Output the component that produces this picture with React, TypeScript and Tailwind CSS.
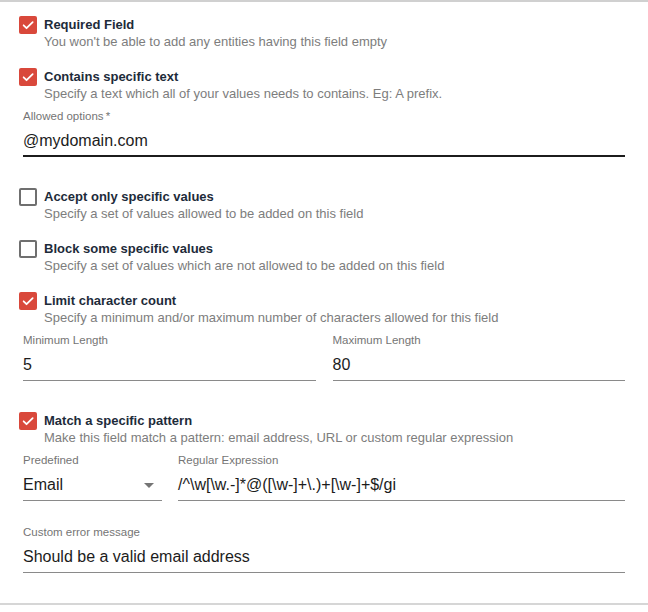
import React from "react";

type CheckProps = {
  checked: boolean;
  title: string;
  description: string;
};

function Check({ checked, title, description }: CheckProps) {
  return (
    <div className="flex items-start">
      {checked ? (
        <div className="mt-[6px] flex h-[18px] w-[18px] shrink-0 items-center justify-center rounded-[2px] bg-[#d9483b]">
          <svg width="14" height="14" viewBox="0 0 24 24" fill="none">
            <path
              d="M4.5 12.5l5 5L20 7"
              stroke="white"
              strokeWidth="3"
              strokeLinecap="round"
              strokeLinejoin="round"
            />
          </svg>
        </div>
      ) : (
        <div className="mt-[6px] h-[18px] w-[18px] shrink-0 rounded-[2px] border-2 border-[#6f6f6f]" />
      )}
      <div className="ml-[7px]">
        <div className="mt-[6px] text-[13px] leading-[18px] font-bold text-[#1d2b3a]">
          {title}
        </div>
        <div className="text-[13px] leading-[15px] text-[#7d7d7d]">
          {description}
        </div>
      </div>
    </div>
  );
}

type FieldProps = {
  label: string;
  value: string;
  focused?: boolean;
  select?: boolean;
  className?: string;
};

function Field({ label, value, focused, select, className }: FieldProps) {
  return (
    <div className={className}>
      <div className="text-[11.5px] leading-[14px] text-[#757575]">{label}</div>
      <div
        className={
          focused
            ? "mt-[8px] flex items-center border-b-2 border-[#1c1c1c] pb-[4px]"
            : "mt-[8px] flex items-center border-b border-[#8a8a8a] pb-[5px]"
        }
      >
        <span className="flex-1 text-[16px] leading-[20px] text-[#1c1c1c]">
          {value}
        </span>
        {select && (
          <svg width="10" height="5" viewBox="0 0 10 5" className="mr-[8px]">
            <path d="M0 0h10L5 5z" fill="#757575" />
          </svg>
        )}
      </div>
    </div>
  );
}

export default function App() {
  return (
    <div
      className="h-[612px] w-[648px] bg-white"
      style={{ fontFamily: "'Liberation Sans', Arial, sans-serif" }}
    >
      <div className="border-t-2 border-[#d0d0d0]" />
      <div className="px-[19px] pr-[23px] pt-[8px]">
        <Check
          checked
          title="Required Field"
          description="You won't be able to add any entities having this field empty"
        />
        <div className="mt-[13px]">
          <Check
            checked
            title="Contains specific text"
            description="Specify a text which all of your values needs to contains. Eg: A prefix."
          />
        </div>
        <div className="ml-[4px] mt-[8px]">
          <Field label={"Allowed options\u2009*"} value="@mydomain.com" focused />
        </div>
        <div className="mt-[25px]">
          <Check
            checked={false}
            title="Accept only specific values"
            description="Specify a set of values allowed to be added on this field"
          />
        </div>
        <div className="mt-[13px]">
          <Check
            checked={false}
            title="Block some specific values"
            description="Specify a set of values which are not allowed to be added on this field"
          />
        </div>
        <div className="mt-[13px]">
          <Check
            checked
            title="Limit character count"
            description="Specify a minimum and/or maximum number of characters allowed for this field"
          />
        </div>
        <div className="ml-[4px] mt-[8px] flex gap-[17px]">
          <Field label="Minimum Length" value="5" className="flex-1" />
          <Field label="Maximum Length" value="80" className="flex-1" />
        </div>
        <div className="mt-[25px]">
          <Check
            checked
            title="Match a specific pattern"
            description="Make this field match a pattern: email address, URL or custom regular expression"
          />
        </div>
        <div className="ml-[4px] mt-[8px] flex gap-[16px]">
          <Field label="Predefined" value="Email" select className="w-[139px]" />
          <Field
            label="Regular Expression"
            value="/^\w[\w.-]*@([\w-]+\.)+[\w-]+$/gi"
            className="flex-1"
          />
        </div>
        <div className="ml-[4px] mt-[24px]">
          <Field label="Custom error message" value="Should be a valid email address" />
        </div>
      </div>
      <div className="mt-[30px] border-t-2 border-[#d6d6d6]" />
    </div>
  );
}
